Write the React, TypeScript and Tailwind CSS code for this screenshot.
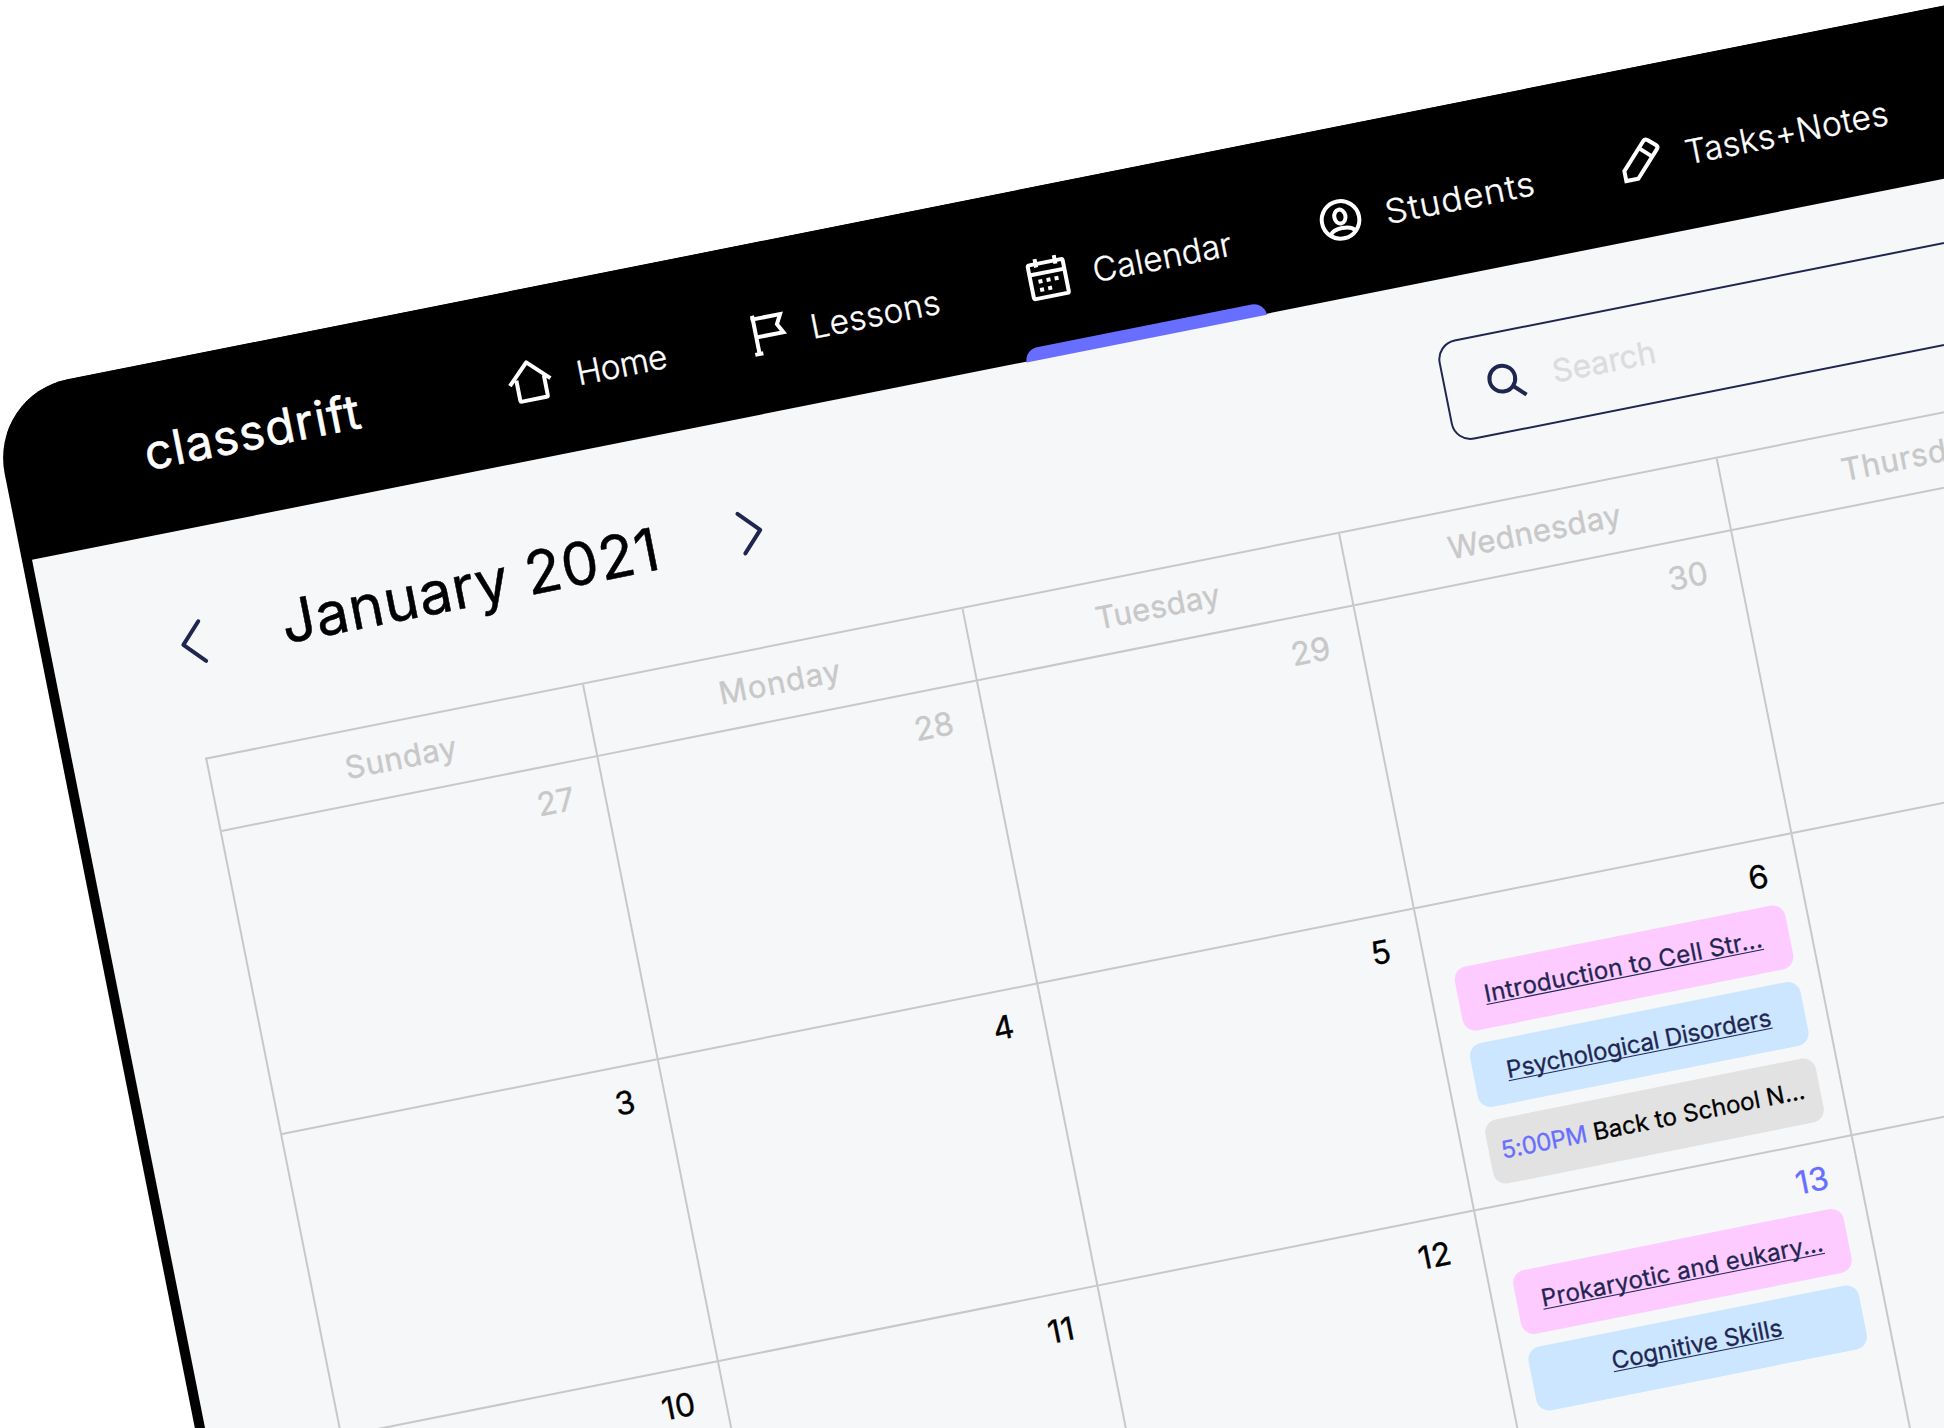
import React from "react";

type IconProps = { children: React.ReactNode };

function NavIcon({ children }: IconProps) {
  return (
    <svg
      viewBox="0 0 48 48"
      className="h-12 w-12 shrink-0 overflow-visible"
      fill="none"
      stroke="white"
      strokeWidth={4}
    >
      {children}
    </svg>
  );
}

const HomeIcon = () => (
  <NavIcon>
    <path d="M4.6 25.2 L25.2 5 L45.9 25.2" strokeLinejoin="round" />
    <path d="M12 21 V41 Q12 42.7 13.7 42.7 H38.3 Q40 42.7 40 41 V21" />
  </NavIcon>
);

const FlagIcon = () => (
  <NavIcon>
    <path d="M17.8 3.4 V42.5" />
    <path d="M13.4 42.4 H21.6" />
    <path d="M15.6 7.2 H45.6 L40.6 16.5 L45.4 25.6 H17.8" />
  </NavIcon>
);

const CalendarIcon = () => (
  <NavIcon>
    <rect x="9.7" y="8.2" width="35.6" height="34.4" rx="1.8" />
    <path d="M9.7 18.2 H45.3 M17.9 3 V11.6 M37.5 3 V11.6" />
    <path d="M17.4 26 h4 M25.6 26 h4 M33.8 26 h4 M17.4 34.4 h4 M25.6 34.4 h4" />
  </NavIcon>
);

const StudentIcon = () => (
  <NavIcon>
    <circle cx="27.7" cy="24.4" r="18.8" />
    <ellipse cx="27.7" cy="21" rx="5.6" ry="7" />
    <path d="M15.4 37.2 C19.5 31.2 35.9 31.2 40 37.2" />
  </NavIcon>
);

const PencilIcon = () => (
  <NavIcon>
    <path d="M8.6 42.2 V32 L33 6.2 Q35.2 4.1 37.3 6.1 L44.6 12.6 Q46.8 14.7 44.8 16.8 L20.8 42.2 Z" />
    <path d="M27.6 12.6 L38.2 22.6" />
  </NavIcon>
);

const NAV = [
  { label: "Home", Icon: HomeIcon, box: "w-[238.5px]", text: "tracking-[-0.4px]" },
  { label: "Lessons", Icon: FlagIcon, box: "w-[288px]", text: "tracking-[0.35px]" },
  { label: "Calendar", Icon: CalendarIcon, box: "w-[298px]", text: "tracking-[0.15px]" },
  { label: "Students", Icon: StudentIcon, box: "w-[307px]", text: "origin-left scale-x-[1.06] tracking-[0.9px]" },
  { label: "Tasks+Notes", Icon: PencilIcon, box: "w-[400px]", text: "-ml-px tracking-[0.36px]" },
];

const DAYS = [
  { name: "Sunday", text: "pr-[2px] tracking-[0.6px]" },
  { name: "Monday", text: "tracking-[1px]" },
  { name: "Tuesday", text: "tracking-[0.38px]" },
  { name: "Wednesday", text: "pr-[1px] tracking-[0.4px]" },
  { name: "Thursday", text: "pr-[2px] tracking-[0.6px]" },
];

type Event = { title: string; time?: string; box: string; text: string };
type Day = { n?: number; tone?: string; events?: Event[]; shift?: string };

const MUTED = "text-[#c8c8c8]";
const INK = "text-black";
const PINK = "bg-[#fdcbff] text-[#1f2650]";
const BLUE = "bg-[#cce6ff] text-[#1f2650]";
const GRAY = "bg-[#e2e2e2] text-black";

const WEEKS: Day[][] = [
  [
    { n: 27, tone: MUTED },
    { n: 28, tone: MUTED },
    { n: 29, tone: MUTED },
    { n: 30, tone: MUTED },
    {},
  ],
  [
    { n: 3, tone: INK },
    { n: 4, tone: INK },
    { n: 5, tone: INK },
    {
      n: 6,
      tone: INK,
      events: [
        { title: "Introduction to Cell Str...", box: PINK, text: "tracking-[0.36px]" },
        { title: "Psychological Disorders", box: BLUE, text: "tracking-[-0.18px]" },
        { title: "Back to School N...", time: "5:00PM", box: GRAY, text: "tracking-[0.02px]" },
      ],
    },
    {},
  ],
  [
    { n: 10, tone: INK },
    { n: 11, tone: INK },
    { n: 12, tone: INK },
    {
      n: 13,
      tone: "text-[#686eff]",
      shift: "-ml-[1.7px] pt-[0.8px]",
      events: [
        { title: "Prokaryotic and eukary...", box: PINK, text: "tracking-[0.18px]" },
        { title: "Cognitive Skills", box: BLUE, text: "tracking-[0.04px] relative -top-[2.4px]" },
      ],
    },
    {},
  ],
];

function EventPill({ event }: { event: Event }) {
  return (
    <div
      className={`flex h-[65.4px] w-[337px] items-center justify-center rounded-[13px] pr-[1px] pb-[2px] text-[24px] leading-none whitespace-nowrap [-webkit-text-stroke-width:0.3px] ${event.box}`}
    >
      {event.time ? (
        <span className="relative -left-[1px]">
          <span className="tracking-[-0.3px] text-[#686eff]">{event.time}</span>
          <span className={event.text}> {event.title}</span>
        </span>
      ) : (
        <span className={`underline decoration-[1.4px] underline-offset-[2px] [text-decoration-skip-ink:none] ${event.text}`}>
          {event.title}
        </span>
      )}
    </div>
  );
}

function DayCell({ day }: { day: Day }) {
  return (
    <div className="h-[308.4px] border-r-2 border-b-2 border-[#c8c8c8] pl-[25px]">
      <div className={`flex h-[66px] justify-end pt-[18px] pr-[30px] text-[32px] leading-9 tracking-[0.2px] [-webkit-text-stroke-width:0.35px] ${day.tone ?? ""}`}>
        {day.n}
      </div>
      <div className={`flex flex-col gap-[12.7px] ${day.shift ?? ""}`}>
        {day.events?.map((e) => <EventPill key={e.title} event={e} />)}
      </div>
    </div>
  );
}

function Header() {
  return (
    <header className="flex h-[170.4px] bg-black text-white">
      <div className="w-[498px] pt-[60px] pl-[131.7px] text-[48px] leading-[56px] tracking-[1.2px] [-webkit-text-stroke-width:0.6px]">
        classdrift
      </div>
      <nav className="flex">
        {NAV.map(({ label, Icon, box, text }) => (
          <a key={label} className={`flex flex-col justify-between ${box}`}>
            <span className="flex items-center gap-[25px] pt-[68px]">
              <Icon />
              <span className={`pt-[3px] text-[33.4px] leading-10 font-light whitespace-nowrap [-webkit-text-stroke-width:0.35px] ${text}`}>
                {label}
              </span>
            </span>
            {label === "Calendar" && (
              <span className="relative top-[0.6px] -ml-[10px] h-[13px] w-[245px] rounded-t-[13px] bg-[#686eff]" />
            )}
          </a>
        ))}
      </nav>
    </header>
  );
}

function Chevron({ d }: { d: string }) {
  return (
    <svg viewBox="0 0 28 48" className="h-12 w-7 shrink-0" fill="none" stroke="#1f2650" strokeWidth={4} strokeLinecap="round" strokeLinejoin="round">
      <path d={d} />
    </svg>
  );
}

function Toolbar() {
  return (
    <div className="flex h-[225.2px] items-center pl-[126.5px] text-black">
      <Chevron d="M25 3.8 L5.8 24 L25 44.2" />
      <h1 className="w-[543px] shrink-0 pl-[78.5px] text-[59px] leading-[60px] whitespace-nowrap [-webkit-text-stroke-width:0.5px]">
        <span className="relative -top-[1.5px] tracking-[0.73px]">January 2021</span>
      </h1>
      <Chevron d="M3.8 3.8 L23 24 L3.8 44.2" />
      <div className="ml-[692.5px] flex h-[101.5px] w-[720px] items-center rounded-[20px] border-2 border-[#1f2650] pl-[40.5px]">
        <svg viewBox="0 0 48 48" className="h-12 w-12 shrink-0" fill="none" stroke="#1f2650" strokeWidth={4}>
          <circle cx="17.3" cy="20.7" r="12.9" />
          <path d="M26.4 29.8 L38 41.2" />
        </svg>
        <span className="pl-[20px] text-[31.5px] leading-10 tracking-[0.05px] text-[#dcdcdc] [-webkit-text-stroke-width:0.4px]">
          Search
        </span>
      </div>
    </div>
  );
}

export default function App() {
  return (
    <div className="h-[1428px] w-[1944px] overflow-hidden bg-white font-['Inter',sans-serif]">
      <div className="mt-[394.8px] -ml-[10.65px] h-[2000px] w-[2700px] origin-top-left rotate-[-11.27deg] overflow-hidden rounded-tl-[80px] bg-black">
        <div className="pl-[9.5px]">
          <Header />
          <main className="h-[1800px] bg-[#f6f7f9]">
            <Toolbar />
            <div className="ml-[131.6px] pt-[2px]">
              <div className="grid w-max grid-cols-[384.4px_386.4px_384.2px_385px_385px] border-t-2 border-l-2 border-[#c8c8c8]">
                {DAYS.map((d) => (
                  <div
                    key={d.name}
                    className={`flex h-[74.8px] items-center justify-center border-r-2 border-b-2 border-[#c8c8c8] text-[31px] leading-none text-[#c8c8c8] [-webkit-text-stroke-width:0.4px] ${d.text}`}
                  >
                    {d.name}
                  </div>
                ))}
                {WEEKS.flat().map((day, i) => (
                  <DayCell key={i} day={day} />
                ))}
              </div>
            </div>
          </main>
        </div>
      </div>
    </div>
  );
}
